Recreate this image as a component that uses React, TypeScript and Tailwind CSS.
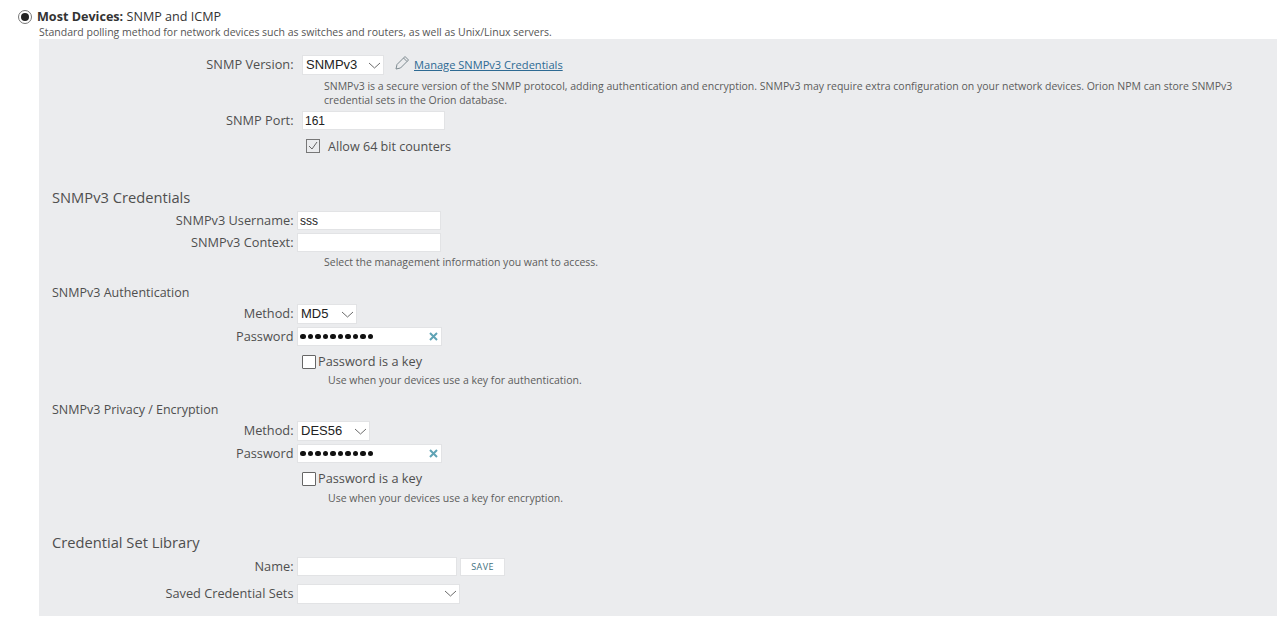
import type { ReactNode } from 'react';

const FIELD = 'bg-white border border-[#e2e3e5]';
const ARIAL = "font-['Liberation_Sans',Arial,sans-serif] text-[12px] text-[#222]";

function Chevron() {
  return (
    <svg width="13" height="7" viewBox="0 0 13 7" fill="none" stroke="#6b6b6b" strokeWidth="1">
      <path d="M1 1l5.5 5L12 1" />
    </svg>
  );
}

function Row({ label, height, top, children }: { label?: string; height: number; top: number; children: ReactNode }) {
  return (
    <div className="flex items-center" style={{ height, marginTop: top }}>
      <div className="w-[255px] shrink-0 pr-[0.5px] text-right text-[12.75px] text-[#4f4f4f]">{label}</div>
      <div className="ml-[3px] flex items-center">{children}</div>
    </div>
  );
}

function Select({ value, width }: { value?: string; width: number }) {
  return (
    <div className={`${FIELD} flex h-[20px] items-center justify-between pl-[3px] pr-[2px]`} style={{ width }}>
      <span className={`${ARIAL} text-[13px]`}>{value}</span>
      <Chevron />
    </div>
  );
}

function TextBox({ value, width }: { value?: string; width: number }) {
  return (
    <div className={`${FIELD} flex h-[19px] items-center pl-[2px] ${ARIAL}`} style={{ width }}>
      {value}
    </div>
  );
}

function Password() {
  return (
    <div className={`${FIELD} flex h-[19px] w-[145px] items-center justify-between pl-[2px] pr-[3px]`}>
      <span className="flex gap-[2px]">
        {Array.from({ length: 10 }).map((_, i) => (
          <span key={i} className="h-[5.5px] w-[5.5px] rounded-full bg-[#111]" />
        ))}
      </span>
      <svg width="9" height="9" viewBox="0 0 9 9" stroke="#5fa3b5" strokeWidth="2">
        <path d="M1 1l7 7M8 1L1 8" />
      </svg>
    </div>
  );
}

function KeyCheck() {
  return (
    <div className="flex items-center">
      <span className="ml-[5px] h-[14px] w-[14px] rounded-[1px] border border-[#666] bg-white" />
      <span className="ml-[2px] text-[12.75px] text-[#4f4f4f]">Password is a key</span>
    </div>
  );
}

function Hint({ children, left, height, top }: { children: ReactNode; left: number; height: number; top: number }) {
  return (
    <p className="text-[10.5px] leading-[14px] text-[#5c5c5c]" style={{ marginLeft: left, height, marginTop: top }}>
      {children}
    </p>
  );
}

export default function App() {
  return (
    <div className="h-[632px] w-[1287px] overflow-hidden bg-white font-['Open_Sans',sans-serif]">
      <div className="flex items-center pl-[18px] pt-[8px]">
        <span className="flex h-[14px] w-[14px] items-center justify-center rounded-full border border-[#777]">
          <span className="h-[8px] w-[8px] rounded-full bg-[#222]" />
        </span>
        <span className="ml-[5px] text-[12.6px] leading-[17px] text-[#333]">
          <b className="font-bold">Most Devices:</b> SNMP and ICMP
        </span>
      </div>
      <p className="ml-[39px] text-[10.5px] leading-[14px] text-[#555]">
        Standard polling method for network devices such as switches and routers, as well as Unix/Linux servers.
      </p>

      <div className="ml-[39px] h-[577px] w-[1238px] bg-[#ebecee]">
        <div className="h-[16px]" />
        <Row label="SNMP Version:" height={20} top={0}>
          <div className="ml-[5px]"><Select value="SNMPv3" width={82} /></div>
          <svg width="15" height="15" viewBox="0 0 15 15" fill="none" stroke="#7d8a90" strokeWidth="1" className="ml-[11px] -mt-[5px]">
            <path d="M1 14l1-4.5L10 1.5l3.5 3.5L5.5 13 1 14zM8.5 3l3.5 3.5" />
          </svg>
          <a className="ml-[4px] text-[11.1px] text-[#2d6a93] underline">Manage SNMPv3 Credentials</a>
        </Row>
        <Hint left={285} height={28} top={4}>
          SNMPv3 is a secure version of the SNMP protocol, adding authentication and encryption. SNMPv3 may require extra configuration on your network devices. Orion NPM can store SNMPv3 credential sets in the Orion database.
        </Hint>
        <Row label="SNMP Port:" height={19} top={4}>
          <div className="ml-[5px]"><TextBox value="161" width={143} /></div>
        </Row>
        <Row height={16} top={9}>
          <svg width="14" height="14" viewBox="0 0 14 14" fill="none" className="ml-[9px] -mt-[3px]">
            <rect x="0.5" y="0.5" width="13" height="13" stroke="#777" />
            <path d="M3 7l3 3 5-7" stroke="#666" />
          </svg>
          <span className="ml-[8px] text-[12.6px] text-[#4f4f4f]">Allow 64 bit counters</span>
        </Row>

        <h3 className="ml-[13px] mt-[32px] h-[20px] text-[14.7px] leading-[20px] text-[#4f4f4f]">SNMPv3 Credentials</h3>
        <Row label="SNMPv3 Username:" height={19} top={4}>
          <TextBox value="sss" width={144} />
        </Row>
        <Row label="SNMPv3 Context:" height={19} top={3}>
          <TextBox width={144} />
        </Row>
        <Hint left={285} height={14} top={3}>Select the management information you want to access.</Hint>

        <h4 className="ml-[13px] mt-[15px] h-[18px] text-[12.5px] leading-[18px] text-[#4f4f4f]">SNMPv3 Authentication</h4>
        <Row label="Method:" height={20} top={2}>
          <Select value="MD5" width={60} />
        </Row>
        <Row label="Password" height={19} top={3}>
          <Password />
        </Row>
        <Row height={18} top={7}>
          <KeyCheck />
        </Row>
        <Hint left={289} height={14} top={2}>Use when your devices use a key for authentication.</Hint>

        <h4 className="ml-[13px] mt-[14px] h-[18px] text-[12.5px] leading-[18px] text-[#4f4f4f]">SNMPv3 Privacy / Encryption</h4>
        <Row label="Method:" height={20} top={2}>
          <Select value="DES56" width={73} />
        </Row>
        <Row label="Password" height={19} top={3}>
          <Password />
        </Row>
        <Row height={18} top={7}>
          <KeyCheck />
        </Row>
        <Hint left={289} height={14} top={3}>Use when your devices use a key for encryption.</Hint>

        <h3 className="ml-[13px] mt-[27px] h-[20px] text-[14.7px] leading-[20px] text-[#4f4f4f]">Credential Set Library</h3>
        <Row label="Name:" height={19} top={5}>
          <TextBox width={160} />
          <button className={`${FIELD} ml-[3px] h-[18px] w-[45px] text-[9px] tracking-[0.4px] text-[#3f7080]`}>SAVE</button>
        </Row>
        <Row label="Saved Credential Sets" height={19} top={8}>
          <div className="pr-[1px]"><Select width={163} /></div>
        </Row>
      </div>
    </div>
  );
}
